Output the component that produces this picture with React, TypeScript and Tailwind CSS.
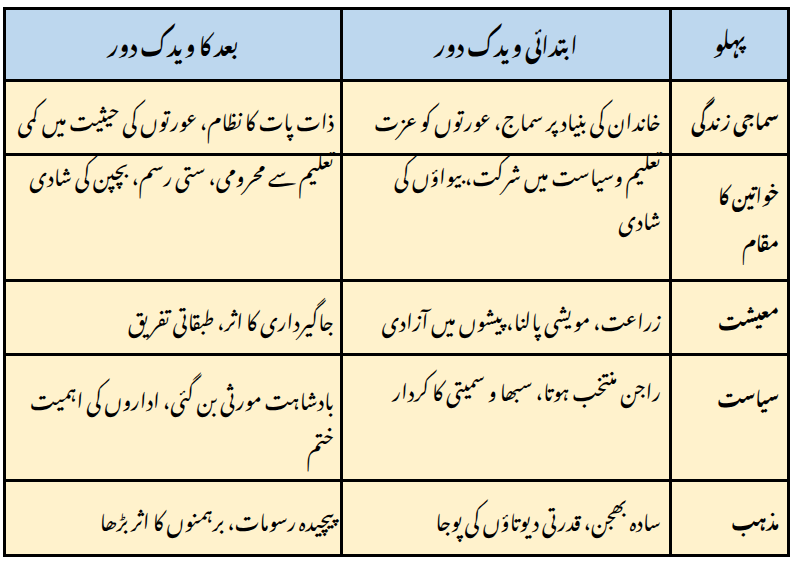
import React from "react";

const font = {
  fontFamily: '"Noto Nastaliq Urdu", "Noto Naskh Arabic", "Noto Sans Arabic", "DejaVu Sans", sans-serif',
};

type Row = {
  aspect: string[];
  early: string[];
  late: string[];
  h: string;
  aspectCls: string;
  earlyCls: string;
  lateCls: string;
};

const rows: Row[] = [
  {
    aspect: ["سماجی زندگی"],
    early: ["خاندان کی بنیاد پر سماج، عورتوں کو عزت"],
    late: ["ذات پات کا نظام، عورتوں کی حیثیت میں کمی"],
    h: "h-[71px]",
    aspectCls: "justify-center",
    earlyCls: "justify-center",
    lateCls: "justify-center",
  },
  {
    aspect: ["خواتین کا", "مقام"],
    early: ["تعلیم وسیاست میں شرکت، بیواؤں کی", "شادی"],
    late: ["تعلیم سے محرومی، ستی رسم، بچپن کی شادی"],
    h: "h-[123px]",
    aspectCls: "justify-start pt-[22px] gap-[17px]",
    earlyCls: "justify-start pt-[2px] gap-[14px]",
    lateCls: "justify-start pt-[2px]",
  },
  {
    aspect: ["معیشت"],
    early: ["زراعت، مویشی پالنا، پیشوں میں آزادی"],
    late: ["جاگیرداری کا اثر، طبقاتی تفریق"],
    h: "h-[71px]",
    aspectCls: "justify-center",
    earlyCls: "justify-center",
    lateCls: "justify-center",
  },
  {
    aspect: ["سیاست"],
    early: ["راجن منتخب ہوتا، سبھا و سمیتی کا کردار"],
    late: ["بادشاہت مورثی بن گئی، اداروں کی اہمیت", "ختم"],
    h: "h-[123px]",
    aspectCls: "justify-start pt-[24px]",
    earlyCls: "justify-start pt-[17px]",
    lateCls: "justify-start pt-[26px] gap-[19px]",
  },
  {
    aspect: ["مذہب"],
    early: ["سادہ بھجن، قدرتی دیوتاؤں کی پوجا"],
    late: ["پیچیدہ رسومات، برہمنوں کا اثر بڑھا"],
    h: "h-[72px]",
    aspectCls: "justify-center",
    earlyCls: "justify-center",
    lateCls: "justify-center",
  },
];

function Cell({ lines, cls, pad, text }: { lines: string[]; cls: string; pad: string; text: string }) {
  return (
    <div className={`flex w-full flex-col bg-[#fff2cc] ${pad} ${cls}`}>
      {lines.map((l, i) => (
        <div key={i} className={`h-[30px] whitespace-nowrap leading-[30px] text-black ${text}`}>
          {l}
        </div>
      ))}
    </div>
  );
}

function Head({ children }: { children: React.ReactNode }) {
  return (
    <div className="flex h-[69px] items-center justify-center bg-[#bdd7ee] pb-[6px] text-[22px] font-bold text-black">
      {children}
    </div>
  );
}

export default function App() {
  return (
    <div className="h-[562px] w-[794px] bg-white pl-[3px] pt-[7px]" style={font}>
      <div
        dir="rtl"
        className="grid w-[787px] grid-cols-[115px_326px_334px] gap-[3px] bg-black p-[3px]"
      >
        <Head>پہلو</Head>
        <Head>ابتدائی ویدک دور</Head>
        <Head>بعد کا ویدک دور</Head>
        {rows.map((r, i) => (
          <React.Fragment key={i}>
            <div className={`${r.h} flex`}>
              <Cell lines={r.aspect} cls={r.aspectCls} pad="pr-[8px]" text="text-[19px] font-bold" />
            </div>
            <div className={`${r.h} flex`}>
              <Cell lines={r.early} cls={r.earlyCls} pad="pr-[8px]" text="text-[21px]" />
            </div>
            <div className={`${r.h} flex`}>
              <Cell lines={r.late} cls={r.lateCls} pad="pr-[6px]" text="text-[21px]" />
            </div>
          </React.Fragment>
        ))}
      </div>
    </div>
  );
}
